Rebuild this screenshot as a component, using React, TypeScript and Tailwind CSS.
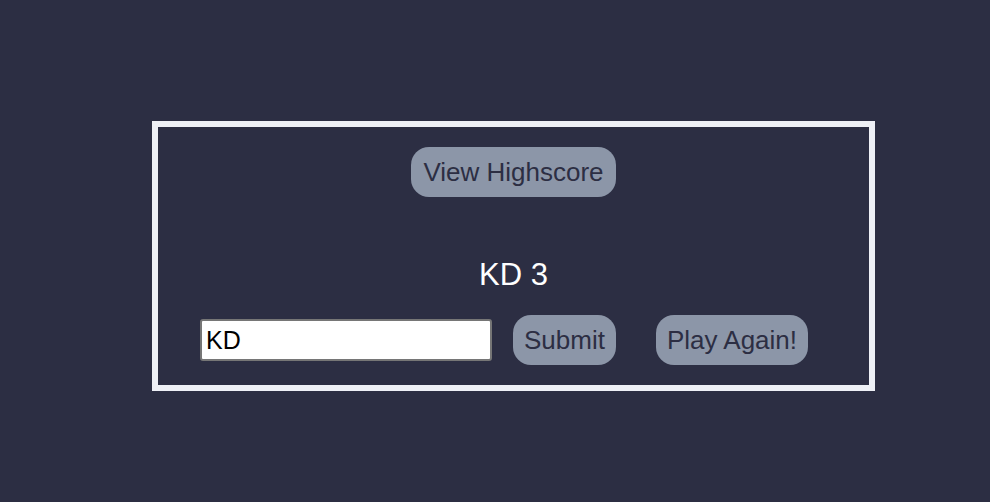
import React, { useState } from "react";

const btn =
  "rounded-[18px] bg-[#8c96a8] px-[11px] py-[10px] text-[26px] leading-[30px] text-[#2c2e43]";

const App: React.FC = () => {
  const [name, setName] = useState("KD");
  return (
    <div
      className="min-h-[502px] w-full bg-[#2c2e43] pt-[121px]"
      style={{ fontFamily: '"Liberation Sans", Arial, sans-serif' }}
    >
      <div className="ml-[152px] flex w-[723px] flex-col items-center border-[6px] border-[#eef0f6] pt-[20px] pb-[20px]">
        <button className={`${btn} px-[12px]`}>View Highscore</button>
        <div className="mt-[60px] text-[31px] leading-[36px] text-white">KD 3</div>
        <div className="mt-[22px] flex w-full items-center pl-[42px]">
          <input
            value={name}
            onChange={(e) => setName(e.target.value)}
            className="h-[42px] w-[292px] rounded-[3px] border-2 border-[#767676] bg-white px-[4px] text-[25px] text-black outline-none"
          />
          <button className={`${btn} ml-[21px] py-[10.5px]`}>Submit</button>
          <button className={`${btn} ml-[40px] py-[10.5px]`}>Play Again!</button>
        </div>
      </div>
    </div>
  );
};

export default App;
